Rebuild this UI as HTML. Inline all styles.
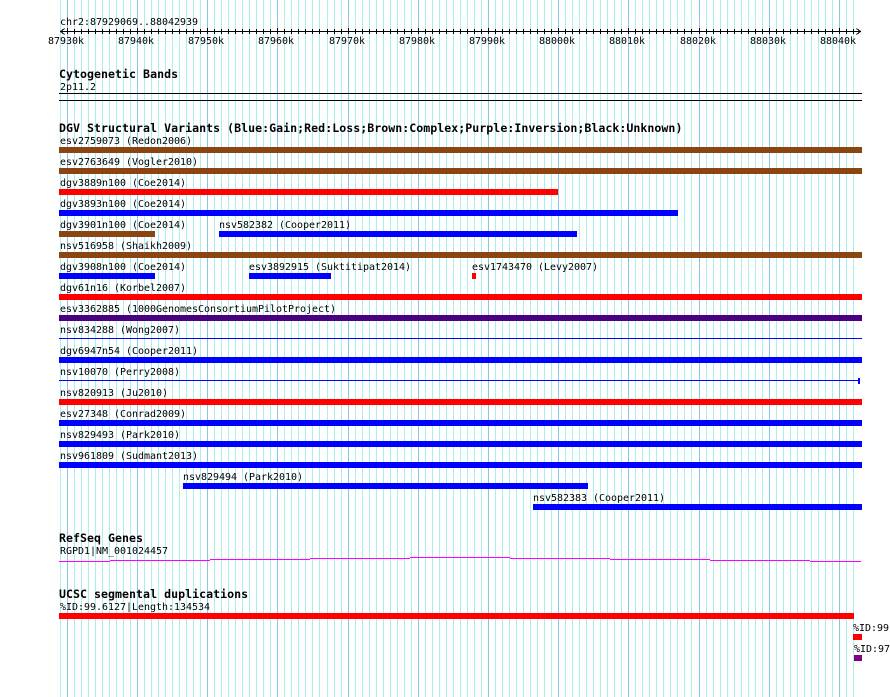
<!DOCTYPE html>
<html>
<head>
<meta charset="utf-8">
<style>
html,body{margin:0;padding:0;background:#fff;width:890px;height:697px;overflow:hidden}
svg{display:block;position:absolute;left:0;top:0}
text{font-family:"DejaVu Sans Mono","Liberation Mono",monospace;font-size:10px;fill:#000;white-space:pre;text-rendering:optimizeSpeed;letter-spacing:-0.02px}
text.b{font-size:11.6px;font-weight:bold;letter-spacing:0.025px}
</style>
</head>
<body>
<svg width="890" height="697" viewBox="0 0 890 697" shape-rendering="crispEdges">
<path fill="none" stroke="#aaeeee" stroke-width="1" d="M60.5 0V697M74.5 0V697M81.5 0V697M88.5 0V697M95.5 0V697M102.5 0V697M109.5 0V697M116.5 0V697M123.5 0V697M130.5 0V697M144.5 0V697M151.5 0V697M158.5 0V697M165.5 0V697M172.5 0V697M179.5 0V697M186.5 0V697M193.5 0V697M200.5 0V697M214.5 0V697M221.5 0V697M228.5 0V697M235.5 0V697M242.5 0V697M249.5 0V697M256.5 0V697M263.5 0V697M270.5 0V697M284.5 0V697M291.5 0V697M298.5 0V697M305.5 0V697M312.5 0V697M319.5 0V697M327.5 0V697M334.5 0V697M341.5 0V697M355.5 0V697M362.5 0V697M369.5 0V697M376.5 0V697M383.5 0V697M390.5 0V697M397.5 0V697M404.5 0V697M411.5 0V697M425.5 0V697M432.5 0V697M439.5 0V697M446.5 0V697M453.5 0V697M460.5 0V697M467.5 0V697M474.5 0V697M481.5 0V697M495.5 0V697M502.5 0V697M509.5 0V697M516.5 0V697M523.5 0V697M530.5 0V697M537.5 0V697M544.5 0V697M551.5 0V697M565.5 0V697M572.5 0V697M579.5 0V697M586.5 0V697M593.5 0V697M600.5 0V697M607.5 0V697M614.5 0V697M621.5 0V697M635.5 0V697M642.5 0V697M649.5 0V697M656.5 0V697M663.5 0V697M670.5 0V697M677.5 0V697M684.5 0V697M691.5 0V697M706.5 0V697M713.5 0V697M720.5 0V697M727.5 0V697M734.5 0V697M741.5 0V697M748.5 0V697M755.5 0V697M762.5 0V697M776.5 0V697M783.5 0V697M790.5 0V697M797.5 0V697M804.5 0V697M811.5 0V697M818.5 0V697M825.5 0V697M832.5 0V697M846.5 0V697M853.5 0V697"/>
<path fill="none" stroke="#87c6f0" stroke-width="1" d="M67.5 0V697M137.5 0V697M207.5 0V697M277.5 0V697M348.5 0V697M418.5 0V697M488.5 0V697M558.5 0V697M628.5 0V697M699.5 0V697M769.5 0V697M839.5 0V697"/>

<!-- axis -->
<path fill="none" stroke="#000" stroke-width="1" d="M60 31.5H861M60.5 31.5L64.5 28.5M60.5 31.5L64.5 34.5M860.5 31.5L856.5 28.5M860.5 31.5L856.5 34.5"/>
<path fill="none" stroke="#000" stroke-width="1" d="M67.5 28V34M74.5 29V34M81.5 29V34M88.5 29V34M95.5 29V34M102.5 29V34M109.5 29V34M116.5 29V34M123.5 29V34M130.5 29V34M137.5 28V34M144.5 29V34M151.5 29V34M158.5 29V34M165.5 29V34M172.5 29V34M179.5 29V34M186.5 29V34M193.5 29V34M200.5 29V34M207.5 28V34M214.5 29V34M221.5 29V34M228.5 29V34M235.5 29V34M242.5 29V34M249.5 29V34M256.5 29V34M263.5 29V34M270.5 29V34M277.5 28V34M284.5 29V34M291.5 29V34M298.5 29V34M305.5 29V34M312.5 29V34M319.5 29V34M327.5 29V34M334.5 29V34M341.5 29V34M348.5 28V34M355.5 29V34M362.5 29V34M369.5 29V34M376.5 29V34M383.5 29V34M390.5 29V34M397.5 29V34M404.5 29V34M411.5 29V34M418.5 28V34M425.5 29V34M432.5 29V34M439.5 29V34M446.5 29V34M453.5 29V34M460.5 29V34M467.5 29V34M474.5 29V34M481.5 29V34M488.5 28V34M495.5 29V34M502.5 29V34M509.5 29V34M516.5 29V34M523.5 29V34M530.5 29V34M537.5 29V34M544.5 29V34M551.5 29V34M558.5 28V34M565.5 29V34M572.5 29V34M579.5 29V34M586.5 29V34M593.5 29V34M600.5 29V34M607.5 29V34M614.5 29V34M621.5 29V34M628.5 28V34M635.5 29V34M642.5 29V34M649.5 29V34M656.5 29V34M663.5 29V34M670.5 29V34M677.5 29V34M684.5 29V34M691.5 29V34M699.5 28V34M706.5 29V34M713.5 29V34M720.5 29V34M727.5 29V34M734.5 29V34M741.5 29V34M748.5 29V34M755.5 29V34M762.5 29V34M769.5 28V34M776.5 29V34M783.5 29V34M790.5 29V34M797.5 29V34M804.5 29V34M811.5 29V34M818.5 29V34M825.5 29V34M832.5 29V34M839.5 28V34M846.5 29V34M853.5 29V34"/>
<text x="60" y="25">chr2:87929069..88042939</text>
<text x="48" y="44">87930k</text>
<text x="118" y="44">87940k</text>
<text x="188" y="44">87950k</text>
<text x="258" y="44">87960k</text>
<text x="329" y="44">87970k</text>
<text x="399" y="44">87980k</text>
<text x="469" y="44">87990k</text>
<text x="539" y="44">88000k</text>
<text x="609" y="44">88010k</text>
<text x="680" y="44">88020k</text>
<text x="750" y="44">88030k</text>
<text x="820" y="44">88040k</text>

<!-- cytogenetic -->
<text class="b" x="59" y="78">Cytogenetic Bands</text>
<text x="60" y="90">2p11.2</text>
<rect x="59" y="93" width="803" height="1" fill="#000"/>
<rect x="59" y="100" width="803" height="1" fill="#000"/>

<!-- DGV -->
<text class="b" x="59" y="132">DGV Structural Variants (Blue:Gain;Red:Loss;Brown:Complex;Purple:Inversion;Black:Unknown)</text>

<text x="60" y="144">esv2759073 (Redon2006)</text>
<rect x="59" y="147" width="803" height="6" fill="#8b4513"/>
<text x="60" y="165">esv2763649 (Vogler2010)</text>
<rect x="59" y="168" width="803" height="6" fill="#8b4513"/>
<text x="60" y="186">dgv3889n100 (Coe2014)</text>
<rect x="59" y="189" width="499" height="6" fill="#f00"/>
<text x="60" y="207">dgv3893n100 (Coe2014)</text>
<rect x="59" y="210" width="619" height="6" fill="#00f"/>
<text x="60" y="228">dgv3901n100 (Coe2014)</text>
<rect x="59" y="231" width="96" height="6" fill="#8b4513"/>
<text x="219" y="228">nsv582382 (Cooper2011)</text>
<rect x="219" y="231" width="358" height="6" fill="#00f"/>
<text x="60" y="249">nsv516958 (Shaikh2009)</text>
<rect x="59" y="252" width="803" height="6" fill="#8b4513"/>
<text x="60" y="270">dgv3908n100 (Coe2014)</text>
<rect x="59" y="273" width="96" height="6" fill="#00f"/>
<text x="249" y="270">esv3892915 (Suktitipat2014)</text>
<rect x="249" y="273" width="82" height="6" fill="#00f"/>
<text x="472" y="270">esv1743470 (Levy2007)</text>
<rect x="472" y="273" width="4" height="6" fill="#f00"/>
<text x="60" y="291">dgv61n16 (Korbel2007)</text>
<rect x="59" y="294" width="803" height="6" fill="#f00"/>
<text x="60" y="312">esv3362885 (1000GenomesConsortiumPilotProject)</text>
<rect x="59" y="315" width="803" height="6" fill="#4b0082"/>
<text x="60" y="333">nsv834288 (Wong2007)</text>
<rect x="59" y="338" width="803" height="1" fill="#00f"/>
<text x="60" y="354">dgv6947n54 (Cooper2011)</text>
<rect x="59" y="357" width="803" height="6" fill="#00f"/>
<text x="60" y="375">nsv10070 (Perry2008)</text>
<rect x="59" y="380" width="800" height="1" fill="#00f"/>
<rect x="858" y="378" width="2" height="6" fill="#00f"/>
<text x="60" y="396">nsv820913 (Ju2010)</text>
<rect x="59" y="399" width="803" height="6" fill="#f00"/>
<text x="60" y="417">esv27348 (Conrad2009)</text>
<rect x="59" y="420" width="803" height="6" fill="#00f"/>
<text x="60" y="438">nsv829493 (Park2010)</text>
<rect x="59" y="441" width="803" height="6" fill="#00f"/>
<text x="60" y="459">nsv961809 (Sudmant2013)</text>
<rect x="59" y="462" width="803" height="6" fill="#00f"/>
<text x="183" y="480">nsv829494 (Park2010)</text>
<rect x="183" y="483" width="405" height="6" fill="#00f"/>
<text x="533" y="501">nsv582383 (Cooper2011)</text>
<rect x="533" y="504" width="329" height="6" fill="#00f"/>

<!-- RefSeq -->
<text class="b" x="59" y="542">RefSeq Genes</text>
<text x="60" y="554">RGPD1|NM_001024457</text>
<rect x="59" y="561" width="51" height="1" fill="#f0f"/>
<rect x="110" y="560" width="100" height="1" fill="#f0f"/>
<rect x="210" y="559" width="100" height="1" fill="#f0f"/>
<rect x="310" y="558" width="100" height="1" fill="#f0f"/>
<rect x="410" y="557" width="100" height="1" fill="#f0f"/>
<rect x="510" y="558" width="100" height="1" fill="#f0f"/>
<rect x="610" y="559" width="100" height="1" fill="#f0f"/>
<rect x="710" y="560" width="100" height="1" fill="#f0f"/>
<rect x="810" y="561" width="51" height="1" fill="#f0f"/>

<!-- segdups -->
<text class="b" x="59" y="598">UCSC segmental duplications</text>
<text x="60" y="610">%ID:99.6127|Length:134534</text>
<rect x="59" y="613" width="795" height="6" fill="#f00"/>
<text x="853" y="631">%ID:99</text>
<rect x="853" y="634" width="9" height="6" fill="#f00"/>
<text x="854" y="652">%ID:97</text>
<rect x="854" y="655" width="8" height="6" fill="#800080"/>
</svg>
</body>
</html>
